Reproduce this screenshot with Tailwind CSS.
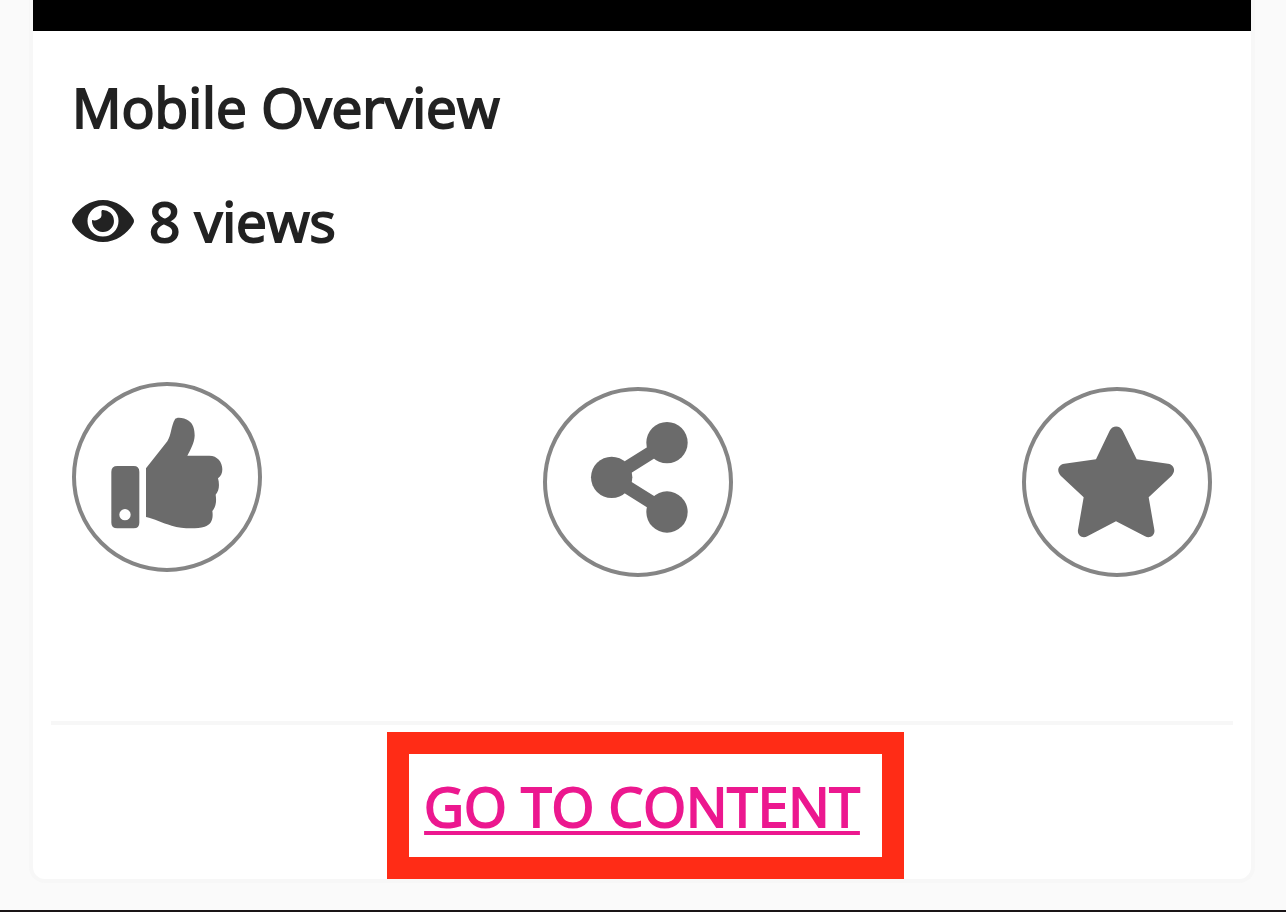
<!DOCTYPE html>
<html lang="en">
<head>
    <meta charset="UTF-8">
    <meta name="viewport" content="width=device-width, initial-scale=1.0">
    <title>Mobile Overview</title>
    <script src="https://cdn.jsdelivr.net/npm/@tailwindcss/browser@4"></script>
</head>
<body class="flex flex-col min-h-screen bg-[#fafafa] border-b-2 border-[#1a1517] font-['Open_Sans',sans-serif] text-[55px] leading-[76px] text-[#222] [-webkit-text-stroke:2px]">

    <!-- Card -->
    <main class="flex flex-col grow ml-[29px] mr-[31px] mb-[27px] bg-white border-4 border-t-0 border-[#f7f7f7] rounded-b-2xl">

        <!-- Media -->
        <div class="h-[31px] bg-black"></div>

        <!-- Details -->
        <div class="px-[39px] pt-[38px]">
            <h1>Mobile Overview</h1>
            <p class="flex items-center gap-[15px] mt-[38px]">
                <svg class="w-[62px] h-[42px]" viewBox="0 0 62 42" fill="#222" aria-hidden="true">
                    <path fill-rule="evenodd" d="M31 0C18 0 7 8 1 18Q-1 21 1 24C7 34 18 42 31 42C44 42 55 34 61 24Q63 21 61 18C55 8 44 0 31 0ZM31 5.5A15.5 15.5 0 1 1 31 36.5A15.5 15.5 0 1 1 31 5.5Z"/>
                    <path d="M30 10A11 11 0 1 1 20 20Q23 21 26 19.500Q30 18 29.500 14Q29 11 30 10Z"/>
                </svg>
                8 views
            </p>
        </div>

        <!-- Actions -->
        <div class="flex justify-between items-start px-[39px] mt-[123px]">
            <button type="button" aria-label="Like" class="size-[190px] rounded-full border-4 border-[#858585]">
                <svg class="size-full" viewBox="48 48 546 546" fill="#6b6b6b" aria-hidden="true">
                    <path fill-rule="evenodd" d="M172 288H221Q238 288 238 305V458Q238 475 221 475H172Q154 475 154 458V305Q154 288 172 288ZM195 417A17 17 0 1 0 195 451A17 17 0 1 0 195 417Z"/>
                    <path d="M258 295L322 214C334 196 333 168 345 148C350 139 374 144 386 152C399 160 404 177 404 197C403 219 391 239 382 257H448C472 257 487 276 487 298C487 309 483 319 474 325C479 343 478 362 467 374C470 394 468 411 457 423C461 450 452 464 434 470C407 478 366 476 335 467C306 459 283 446 258 441Z"/>
                </svg>
            </button>
            <div class="pr-2 mt-[5px]">
                <button type="button" aria-label="Share" class="block size-[190px] rounded-full border-4 border-[#858585]">
                    <svg class="size-full" viewBox="51 63 546 546" fill="#6b6b6b" aria-hidden="true">
                        <path d="M411 218L245 322L411 426" fill="none" stroke="#6b6b6b" stroke-width="40"/>
                        <circle cx="411" cy="218" r="62"/>
                        <circle cx="245" cy="322" r="62"/>
                        <circle cx="411" cy="426" r="62"/>
                    </svg>
                </button>
            </div>
            <button type="button" aria-label="Add to favorites" class="mt-[5px] size-[190px] rounded-full border-4 border-[#858585]">
                <svg class="size-full" viewBox="48 63 546 546" fill="#6b6b6b" aria-hidden="true">
                    <path d="M299 182C307 165 330 165 338 182L380 268L474 281C493 284 498 303 485 317L416 382L433 479C436 496 420 507 405 499L318 454L232 499C217 507 201 496 204 479L221 382L152 317C139 303 144 284 163 281L258 268Z"/>
                </svg>
            </button>
        </div>

        <hr class="mx-[18px] mt-[144px] border-t-4 border-[#f7f7f7]">

        <!-- Link -->
        <div class="flex justify-center mt-[43px]">
            <a href="#" class="relative text-[#ec188f] underline decoration-4 underline-offset-4">
                GO TO CONTENT
                <span class="absolute -top-[36px] -bottom-[35px] -left-[37px] -right-[44px] border-[22px] border-[#ff2c16]"></span>
            </a>
        </div>
    </main>

</body>
</html>
